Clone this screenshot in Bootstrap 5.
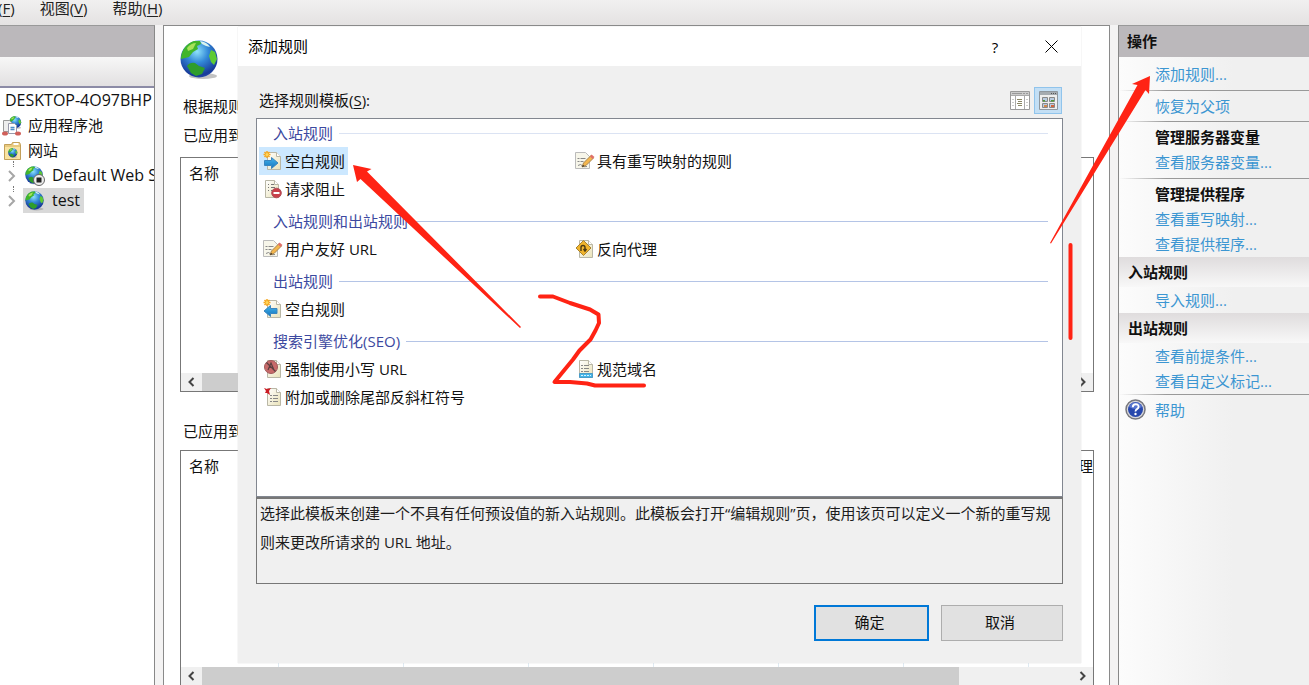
<!DOCTYPE html>
<html lang="zh-CN">
<head>
<meta charset="utf-8">
<meta name="viewport" content="width=device-width, initial-scale=1">
<title>添加规则</title>
<link href="https://cdn.jsdelivr.net/npm/bootstrap@5.3.0/dist/css/bootstrap.min.css" rel="stylesheet">
<style>
  body { font-family: "Open Sans", "Noto Sans CJK SC", sans-serif; font-size: 15px; line-height: 25px; color: #111; background: #f0f0f0; }
  a { text-decoration: none; }
  .app-window { height: 100vh; min-width: 900px; }
  .menu-strip { height: 25px; background: linear-gradient(#f1f0f0, #e4e2e2); gap: 25px; }
  .menu-strip a { color: #222; line-height: 17px; }
  .menu-strip a:first-child { margin-left: -2px; }
  .menu-strip u, .label-row u { text-underline-offset: 2px; }
  .panes { gap: 8px; background: #f4f3f3; min-height: 0; }
  .pane-title { height: 31px; background: #bbb8bb; line-height: 31px; }
  .tree-pane { width: 155px; background: #fff; border-top: 1px solid #999; border-right: 1px solid #888; }
  .tree-tools { height: 31px; background: linear-gradient(#f7f7f7, #e2e0e1); border-bottom: 2px solid #8c8ba6; }
  .tree-list li { height: 25px; white-space: nowrap; padding-left: 2px; gap: 6px; }
  .tree-list .tree-host { padding-left: 5px; font-size: 16px; }
  .tree-list .tree-site { padding-left: 6px; gap: 5px; position: relative; font-size: 16px; }
  .tree-list svg { flex: none; }
  .tree-site .site-name { padding: 0 4px 0 2px; gap: 7px; }
  .tree-site.is-current .site-name { background: #d9d9d9; }
  .tree-site::before { content: ""; position: absolute; left: 13px; top: -2px; height: 6px; border-left: 1px dotted #777; }
  .feature-pane { background: #fff; border: 1px solid #8a8a8a; border-bottom: 0; min-width: 0; padding: 14px 15px 0 16px; }
  .feature-pane p { line-height: 29px; padding-left: 3px; }
  .feature-globe { margin-bottom: 12px; flex: none; }
  .grid-box { border: 1px solid #777; background: #fff; }
  .grid-box th { font-weight: 400; padding: 0 8px; height: 31px; }
  .grid-first { height: 235px; margin-top: 7px; margin-bottom: 25px; }
  .grid-second { margin-top: 4px; border-bottom: 0; }
  .grid-cells { background: repeating-linear-gradient(90deg, transparent 0 124px, #dfeaf2 124px 125px) -27px 0; }
  .scroll-strip { height: 18px; background: #f0f0f0; }
  .scroll-strip svg { width: 21px; flex: none; }
  .thumb-bar { background: #cdcdcd; }
  .thumb-full { width: 95%; }
  .thumb-part { width: 87%; }
  .rule-dialog { position: absolute; left: 74px; right: 28px; top: 1px; background: #f0f0f0; box-shadow: 0 0 1px #ccc; }
  .dialog-title { height: 39px; background: #fff; padding: 0 18px 0 10px; color: #000; }
  .dialog-title button { border: 0; background: none; width: 24px; height: 24px; padding: 0; }
  .dialog-body { padding: 21px 18px 22px; }
  .label-row { height: 27px; margin-bottom: 4px; padding: 0 1px 0 3px; }
  .view-btn { width: 28px; height: 27px; padding: 0; border: 1px solid transparent; background: none; }
  .view-btn.is-on { background: #c3dff5; border-color: #90c4ec; }
  .template-list { height: 379px; background: #fff; border: 1px solid #828790; padding: 0 14px 0 2px; }
  .rule-group + .rule-group { margin-top: 4px; }
  .group-title { height: 28px; line-height: 27px; padding-left: 14px; gap: 6px; color: #3c49a0; font-size: 15px; margin: 0; font-weight: 400; }
  .group-title::after { content: ""; flex: 1; height: 1px; background: #b4c4e6; }
  .group-soft::after { background: #dbe3f3; }
  .rule-items { display: grid; grid-template-columns: 312px 1fr; justify-items: start; }
  .rule-item { height: 28px; border: 0; background: none; padding: 0 3px 0 4px; gap: 2px; color: #111; line-height: 27px; }
  .rule-item.is-picked { background: #cce8ff; }
  .rule-item svg { width: 20px; height: 20px; }
  .rule-about { height: 87px; border: 1px solid #777; border-top-width: 2px; line-height: 29px; color: #1c1c1c; margin: 0 0 21px; padding: 0 1px; }
  .dlg-btn { height: 36px; width: 122px; border: 1px solid #adadad; background: #e1e1e1; color: #111; padding: 0 4px 2px 0; }
  .dlg-btn.is-default { width: 115px; border: 2px solid #0078d7; }
  .action-pane { width: 191px; border-left: 1px solid #888; border-top: 1px solid #999; background: linear-gradient(90deg, #fcfcfc, #f0f0f0 60%); }
  .action-pane a { color: #3c96d2; }
  .action-set { padding: 3px 0 3px 36px; position: relative; }
  .action-set.is-first { padding-top: 5px; }
  .action-set.is-plain { padding-bottom: 2px; }
  .action-set a, .action-set strong { display: block; }
  .rule-under { height: 1px; background: linear-gradient(90deg, transparent, #999 25%); }
  .action-head { height: 30px; line-height: 30px; padding-left: 9px; font-size: 15px; font-weight: 700; margin: 0; background: linear-gradient(#dfdcdd, #f8f8f8); }
  .action-set.action-short { padding: 1px 0 0 36px; }
  .help-mark { position: absolute; left: 6px; top: 4px; }
  .ink { position: absolute; top: 0; pointer-events: none; }
  .ink-start { left: 0; }
  .ink-end { right: 0; }
</style>
</head>
<body>
<svg width="0" height="0" class="position-absolute" aria-hidden="true">
  <defs>
    <radialGradient id="sea" cx=".45" cy=".3" r=".75"><stop offset="0" stop-color="#8ee2fa"/><stop offset=".4" stop-color="#3389d8"/><stop offset=".85" stop-color="#173a98"/><stop offset="1" stop-color="#2a50b5"/></radialGradient>
    <linearGradient id="sheet" x2="1" y2="1"><stop offset="0" stop-color="#fff"/><stop offset="1" stop-color="#e9e2b8"/></linearGradient>
    <linearGradient id="blueArrow" y2="1" x2="0"><stop offset="0" stop-color="#45b6ee"/><stop offset="1" stop-color="#1474bd"/></linearGradient>
    <symbol id="globe" viewBox="0 0 40 40">
      <ellipse cx="23" cy="36" rx="14" ry="3" fill="#999" opacity=".6"/>
      <circle cx="19" cy="19" r="18.500" fill="url(#sea)"/>
      <path d="M1 19C1 10 7 3 14 1l6 0 1 3-4 2 1 3-5 3-4 5-4 1z" fill="#41b52c"/><path d="M7 8q4-5 9-5l-3 6-5 2z" fill="#a7e25a"/>
      <path d="M20 1q7 1 10 6l-4-1-4-2z" fill="#d9f4ee"/>
      <path d="M31 10l4 2 2 7-3 6-3-3-2-6z" fill="#5fcb33"/>
      <path d="M7 26q3-4 8-3l4 3 6 2-3 6-6 2-5-3z" fill="#2f9d2c"/>
    </symbol>
    <symbol id="page" viewBox="0 0 20 20"><path d="M4.500 1.500h9l4 4v13h-13z" fill="url(#sheet)" stroke="#b9b7a6"/><path d="M13.500 1.500v4h4" fill="#fff" stroke="#b9b7a6"/></symbol>
    <symbol id="lines" viewBox="0 0 20 20"><path d="M6 7.500h2m1 0h5M6 10.500h2m1 0h5M6 13.500h2m1 0h5" stroke="#888"/></symbol>
    <symbol id="spark" viewBox="0 0 20 20"><path d="M4 0v7M.5 3.500h7M1.500 1l5 5m0-5l-5 5" stroke="#f5a61d" stroke-width="1.500"/><circle cx="4" cy="3.500" r="1.500" fill="#ffd75c"/></symbol>
    <symbol id="ruleIn" viewBox="0 0 20 20"><use href="#page"/><use href="#spark"/><path d="M1.500 9.500h7v-3l6.500 5.500-6.500 5.500v-3h-7z" fill="url(#blueArrow)" stroke="#3a86bf"/></symbol>
    <symbol id="ruleOut" viewBox="0 0 20 20"><use href="#page"/><use href="#spark"/><path d="M14 9.500H7.500v-3L1 12l6.500 5.500v-3H14z" fill="url(#blueArrow)" stroke="#3a86bf"/></symbol>
    <symbol id="ruleBlock" viewBox="0 0 20 20"><use href="#page" x="-2"/><path d="M5 5.500h1m2 0h3M5 8.500h1m2 0h4M5 11.500h1m2 0h2" stroke="#777"/><circle cx="13.500" cy="14" r="4.800" fill="#c8404a" stroke="#b0505a"/><path d="M10.500 14h6" stroke="#fff" stroke-width="2"/></symbol>
    <symbol id="rulePencil" viewBox="0 0 20 20"><path d="M.5 1.500h10l4 4v12H.5z" fill="#f7f6ea" stroke="#bbb"/><path d="M2.500 7.500h2m1 0h5M2.500 10.500h2m1 0h3M3 14.500q3-2 4 0t5 1" fill="none" stroke="#888"/><path d="M7 16l1.500-4 7.500-7.500 2.500 2.500-7.500 7.500z" fill="#f4b64d" stroke="#a98650"/><path d="M15 5.500l1.500-2 3 2.500-2 2z" fill="#e0706a"/><path d="M7 16l1-2 1.500 1z" fill="#222"/></symbol>
    <symbol id="ruleProxy" viewBox="0 0 20 20"><use href="#page"/><path d="M8.500 1.500L16 9l-7.500 7.500L1 9z" fill="#f0b42c" stroke="#a88330"/><path d="M6 12V8.500a2 2 0 0 1 4 0V11M8.500 10l1.500 2 1.500-2" fill="none" stroke="#4b3a12" stroke-width="1.400"/></symbol>
    <symbol id="ruleLower" viewBox="0 0 20 20"><use href="#page"/><circle cx="8" cy="8" r="6.500" fill="#c86a6a" stroke="#a05a5a"/><path d="M5 11L8 4l3 7M6 8.500h4M3.500 3.500l9 9" stroke="#5c4040" stroke-width="1.200" fill="none"/></symbol>
    <symbol id="ruleSlash" viewBox="0 0 20 20"><use href="#page"/><use href="#lines" x="1" y="1"/><path d="M1 1l3 1 4-1-2 3 1 4-3-2-2 0 1-2z" fill="#cc1c25"/></symbol>
    <symbol id="ruleDomain" viewBox="0 0 20 20"><use href="#page"/><use href="#lines" y="-1"/><path d="M4.500 14.500h13v4h-13z" fill="#45b5e7" stroke="#4a9cc8"/><path d="M6 16.500h10" stroke="#d8f4ff" stroke-dasharray="2 1"/></symbol>
  </defs>
</svg>

<div class="app-window position-relative d-flex flex-column overflow-hidden">
  <nav class="menu-strip d-flex flex-shrink-0" aria-label="菜单">
    <a href="#">(<u>F</u>)</a><a href="#">视图(<u>V</u>)</a><a href="#">帮助(<u>H</u>)</a>
  </nav>

  <div class="panes d-flex flex-grow-1">
    <aside class="tree-pane flex-shrink-0 overflow-hidden">
      <div class="pane-title"></div>
      <div class="tree-tools"></div>
      <ul class="tree-list list-unstyled mb-0">
        <li class="tree-host">DESKTOP-4O97BHP</li>
        <li class="d-flex align-items-center">
          <svg width="20" height="20" viewBox="0 0 20 20"><use href="#globe" x="7" y="0" width="13" height="13"/><path d="M1.500 4.500h6l2 2v9h-8z" fill="#eee" stroke="#999"/><path d="M6.500 7.500h6l2 2v8h-8z" fill="#fff" stroke="#99a"/><path d="M8.500 11.500h4M8.500 13.500h4" stroke="#4d8dc8" stroke-width="1.500"/><ellipse cx="3" cy="17.500" rx="3" ry="2" fill="#d0605a"/><ellipse cx="16" cy="17.500" rx="3" ry="2" fill="#d0605a"/></svg>应用程序池</li>
        <li class="d-flex align-items-center">
          <svg width="20" height="20" viewBox="0 0 20 20"><path d="M2.500 3.500h7l1-2h7l1 2v15h-16z" fill="#e8c97e" stroke="#c2a05a"/><path d="M3 6h15v12H3z" fill="#f9e3a1"/><path d="M11.500 3h5" stroke="#fff" stroke-width="2"/><use href="#globe" x="6" y="7" width="10" height="10"/></svg>网站</li>
        <li class="tree-site d-flex align-items-center">
          <svg width="12" height="14" viewBox="0 0 12 14"><path d="M3 2l5 5-5 5" fill="none" stroke="#a6a6a6" stroke-width="2"/></svg>
          <span class="site-name d-flex align-items-center"><svg width="20" height="20" viewBox="0 0 20 20"><use href="#globe" width="19" height="19"/><circle cx="14" cy="14" r="5.500" fill="#eee" stroke="#666"/><path d="M11.500 11.500h5v5h-5z" fill="#222"/></svg>Default Web Site</span></li>
        <li class="tree-site is-current d-flex align-items-center">
          <svg width="12" height="14" viewBox="0 0 12 14"><path d="M3 2l5 5-5 5" fill="none" stroke="#a6a6a6" stroke-width="2"/></svg>
          <span class="site-name d-flex align-items-center"><svg width="20" height="20"><use href="#globe"/></svg>test</span></li>
      </ul>
    </aside>

    <main class="feature-pane position-relative flex-grow-1 d-flex flex-column">
      <svg class="feature-globe" width="40" height="40"><use href="#globe"/></svg>
      <p class="mb-0">根据规则</p>
      <p class="mb-0">已应用到</p>
      <div class="grid-box grid-first d-flex flex-column flex-shrink-0">
        <table class="w-100"><thead><tr><th>名称</th></tr></thead></table>
        <div class="scroll-strip d-flex align-items-center mt-auto">
          <svg height="12" viewBox="0 0 20 12"><path d="M12 2L8 6l4 4" fill="none" stroke="#444" stroke-width="2"/></svg>
          <div class="flex-grow-1 h-100"><div class="thumb-bar thumb-full h-100"></div></div>
          <svg height="12" viewBox="0 0 20 12"><path d="M8 2l4 4-4 4" fill="none" stroke="#444" stroke-width="2"/></svg>
        </div>
      </div>
      <p class="mb-0">已应用到</p>
      <div class="grid-box grid-second d-flex flex-column flex-grow-1">
        <table class="w-100"><thead><tr><th>名称</th><th class="text-end pe-0">处理</th></tr></thead></table>
        <div class="grid-cells flex-grow-1"></div>
        <div class="scroll-strip d-flex align-items-center">
          <svg height="12" viewBox="0 0 20 12"><path d="M12 2L8 6l4 4" fill="none" stroke="#444" stroke-width="2"/></svg>
          <div class="flex-grow-1 h-100"><div class="thumb-bar thumb-part h-100"></div></div>
          <svg height="12" viewBox="0 0 20 12"><path d="M8 2l4 4-4 4" fill="none" stroke="#444" stroke-width="2"/></svg>
        </div>
      </div>

      <section class="rule-dialog" role="dialog" aria-labelledby="dlgTitle">
        <header class="dialog-title d-flex align-items-center">
          <span id="dlgTitle" class="me-auto">添加规则</span>
          <button type="button" class="me-4" aria-label="帮助">?</button>
          <button type="button" class="d-flex align-items-center justify-content-center ms-2" aria-label="关闭"><svg width="13" height="13" viewBox="0 0 13 13"><path d="M.5.5l12 12M12.500.5l-12 12" stroke="#000"/></svg></button>
        </header>
        <div class="dialog-body">
          <div class="label-row d-flex align-items-center">
            <span id="listLabel" class="me-auto">选择规则模板(<u>S</u>):</span>
            <button type="button" class="view-btn d-flex align-items-center justify-content-center" aria-label="详细信息"><svg width="20" height="19" viewBox="0 0 20 19"><path d="M.5.5h19v18H.5z" fill="#fff" stroke="#9a9a9a"/><path d="M1 1h18v3H1z" fill="#ccc"/><path d="M2 2.500h10m1 0h2m1 0h2" stroke="#999"/><path d="M1 4.500h18M5.500 5v13M14.500 5v13" stroke="#aaa"/><path d="M2 8.500h2m-2 3h2m-2 3h2m12-6h2m-2 3h2m-2 3h2" stroke="#ccc"/><path d="M7 8.500h5M8 10.500h4M7 12.500h5M8 14.500h4" stroke="#8a8765"/></svg></button>
            <button type="button" class="view-btn is-on d-flex align-items-center justify-content-center" aria-label="图标"><svg width="19" height="19" viewBox="0 0 19 19"><path d="M.5.5h18v18H.5z" fill="#eee" stroke="#8f979e"/><path d="M1 1h17v3H1z" fill="#a5abb0"/><path d="M12 2.500h1m1 0h1m1 0h1" stroke="#555"/><path d="M3.500 6.500h5v4h-5zM10.500 6.500h5v4h-5zM3.500 12.500h5v4h-5zM10.500 12.500h5v4h-5z" fill="#b8cbe0" stroke="#888"/><path d="M4 9h2v1.500H4zM12 9h3v1.500h-3z" fill="#519b38"/><path d="M5 14h3v2H5z" fill="#d58a4c"/><path d="M12 14h3v2h-3z" fill="#d5653c"/></svg></button>
          </div>
          <div class="template-list" role="group" aria-labelledby="listLabel">
            <div class="rule-group">
              <h2 class="group-title group-soft d-flex align-items-center">入站规则</h2>
              <div class="rule-items">
                <button type="button" class="rule-item is-picked d-flex align-items-center"><svg><use href="#ruleIn"/></svg>空白规则</button>
                <button type="button" class="rule-item d-flex align-items-center"><svg><use href="#rulePencil"/></svg>具有重写映射的规则</button>
                <button type="button" class="rule-item d-flex align-items-center"><svg><use href="#ruleBlock"/></svg>请求阻止</button>
              </div>
            </div>
            <div class="rule-group">
              <h2 class="group-title d-flex align-items-center">入站规则和出站规则</h2>
              <div class="rule-items">
                <button type="button" class="rule-item d-flex align-items-center"><svg><use href="#rulePencil"/></svg>用户友好 URL</button>
                <button type="button" class="rule-item d-flex align-items-center"><svg><use href="#ruleProxy"/></svg>反向代理</button>
              </div>
            </div>
            <div class="rule-group">
              <h2 class="group-title d-flex align-items-center">出站规则</h2>
              <div class="rule-items">
                <button type="button" class="rule-item d-flex align-items-center"><svg><use href="#ruleOut"/></svg>空白规则</button>
              </div>
            </div>
            <div class="rule-group">
              <h2 class="group-title d-flex align-items-center">搜索引擎优化(SEO)</h2>
              <div class="rule-items">
                <button type="button" class="rule-item d-flex align-items-center"><svg><use href="#ruleLower"/></svg>强制使用小写 URL</button>
                <button type="button" class="rule-item d-flex align-items-center"><svg><use href="#ruleDomain"/></svg>规范域名</button>
                <button type="button" class="rule-item d-flex align-items-center"><svg><use href="#ruleSlash"/></svg>附加或删除尾部反斜杠符号</button>
              </div>
            </div>
          </div>
          <p class="rule-about">选择此模板来创建一个不具有任何预设值的新入站规则。此模板会打开“编辑规则”页，使用该页可以定义一个新的重写规则来更改所请求的 URL 地址。</p>
          <div class="d-flex justify-content-end gap-2">
            <button type="button" class="dlg-btn is-default me-1">确定</button>
            <button type="button" class="dlg-btn">取消</button>
          </div>
        </div>
      </section>
    </main>

    <aside class="action-pane flex-shrink-0">
      <div class="pane-title ps-2 fw-bold">操作</div>
      <div class="action-set is-first"><a href="#">添加规则...</a></div>
      <div class="rule-under"></div>
      <div class="action-set is-plain"><a href="#">恢复为父项</a></div>
      <div class="rule-under"></div>
      <div class="action-set"><strong>管理服务器变量</strong><a href="#">查看服务器变量...</a></div>
      <div class="rule-under"></div>
      <div class="action-set pb-0"><strong>管理提供程序</strong><a href="#">查看重写映射...</a><a href="#">查看提供程序...</a></div>
      <h2 class="action-head">入站规则</h2>
      <div class="action-set action-short"><a href="#">导入规则...</a></div>
      <h2 class="action-head">出站规则</h2>
      <div class="action-set action-short"><a href="#">查看前提条件...</a><a href="#">查看自定义标记...</a></div>
      <div class="rule-under"></div>
      <div class="action-set">
        <svg class="help-mark" width="21" height="21" viewBox="0 0 21 21"><circle cx="10.500" cy="10.500" r="9.500" fill="#d8d8dc" stroke="#77777d" stroke-width="1.500"/><circle cx="10.500" cy="10.500" r="7.500" fill="#2848ad"/><path d="M4 8a7 7 0 0 1 13 0q-6 4-13 0z" fill="#6c8ade" opacity=".7"/><path d="M7.800 8.200q0-3 2.900-3t2.900 2.600q0 1.500-1.600 2.400t-1.400 2.300" fill="none" stroke="#fff" stroke-width="1.900"/><circle cx="10.500" cy="15" r="1.200" fill="#fff"/></svg>
        <a href="#">帮助</a></div>
    </aside>
  </div>

  <svg class="ink ink-start" width="700" height="420" viewBox="0 0 700 420" aria-hidden="true">
    <path d="M353 165l18.500 4-4.500 2.500L521 327l-1 1L360.500 179l-3.500 3z" fill="#ff2314"/>
    <path d="M540 296.500l13 0 17 6.500 20 6.500 8.500 5 .5 8.500-3.500 7.500-5 9-11 11-6.500 9-18.500 22.500 15.500 0 17 1.500 8 2H644" fill="none" stroke="#ff2314" stroke-width="4" stroke-linecap="round" stroke-linejoin="round"/>
  </svg>
  <svg class="ink ink-end" width="309" height="360" viewBox="1000 0 309 360" aria-hidden="true">
    <path d="M1150 76l-1 18-3.500-4L1051 243.500l-1-.5L1137.500 85l-5.500-1z" fill="#ff2314"/>
    <path d="M1070.500 245v93" stroke="#ff2314" stroke-width="4" stroke-linecap="round"/>
  </svg>
</div>
<script src="https://cdn.jsdelivr.net/npm/bootstrap@5.3.0/dist/js/bootstrap.bundle.min.js"></script>
</body>
</html>
